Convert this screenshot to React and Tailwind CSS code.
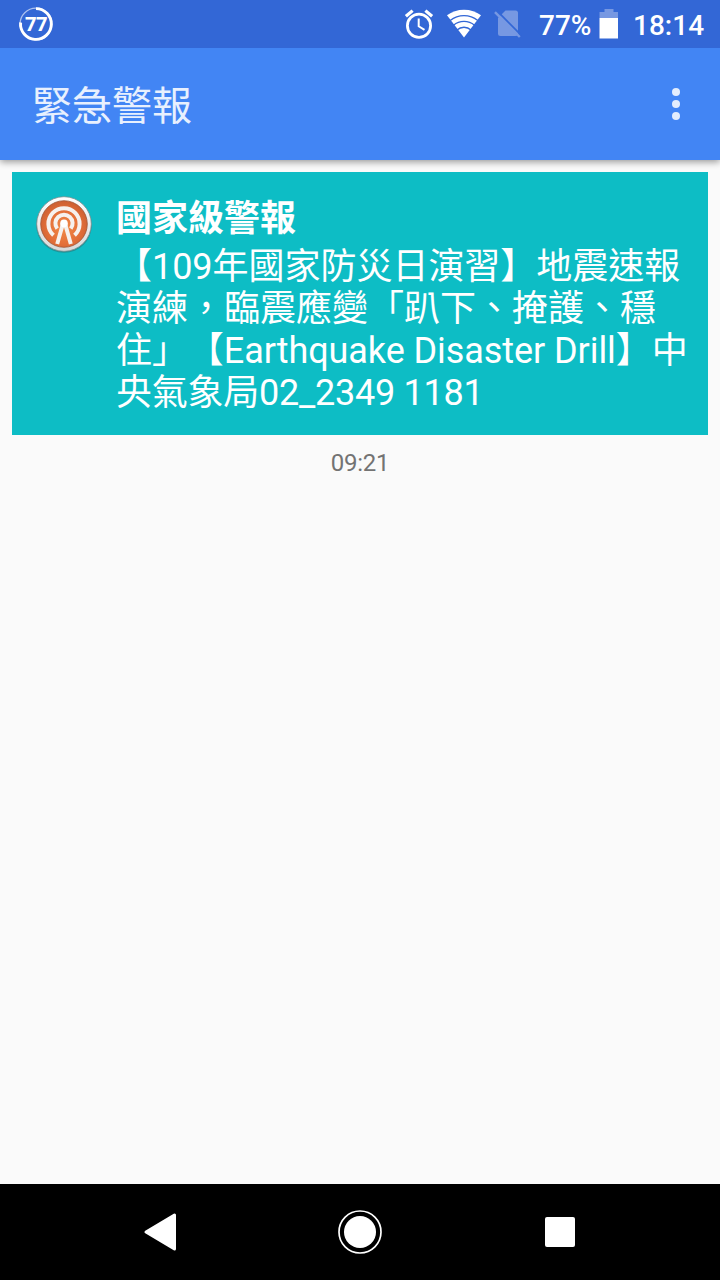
const ALERT_LINES = [
  { text: "【109年國家防災日演習】地震速報", tracking: "tracking-[-0.03px]" },
  { text: "演練，臨震應變「趴下、掩護、穩", tracking: "tracking-normal" },
  { text: "住」【Earthquake Disaster Drill】中", tracking: "tracking-[-0.07px]" },
  { text: "央氣象局02_2349 1181", tracking: "tracking-[-0.25px]" },
];

const BatteryRing = () => (
  <svg className="h-9 w-9" viewBox="0 0 36 36" fill="none" stroke="#fff">
    <circle cx="18" cy="18" r="15.9" strokeWidth="1.2" opacity="0.6" />
    <path d="M18 2.6A15.4 15.4 0 1 1 2.6 16.5" strokeWidth="2.9" />
    <text
      x="18"
      y="25"
      textAnchor="middle"
      fill="#fff"
      stroke="none"
      className="font-['Open_Sans'] text-[20px] font-bold tracking-[-0.5px]"
    >
      77
    </text>
  </svg>
);

const AlarmIcon = () => (
  <svg className="h-7.5 w-7.5" viewBox="0 0 30 30" fill="none" stroke="#fff">
    <circle cx="15" cy="16.7" r="11.6" strokeWidth="2.8" />
    <path d="M1.9 7.3L8.6 1.6M28.1 7.3L21.4 1.6" strokeWidth="3.2" />
    <path d="M14.7 9.5V17.3L20.5 20.8" strokeWidth="2" />
  </svg>
);

const WifiIcon = () => (
  <svg className="h-7.5 w-9" viewBox="0 0 36 30">
    <path d="M18 28.6L1 6.3C5.7 2.8 11.6.8 18 .8s12.3 2 17 5.500z" fill="#fff" />
    <g fill="none" stroke="#3367d6" strokeWidth="1.3">
      <path d="M4.2 11.5A22 22 0 0 1 31.8 11.5" />
      <path d="M7.5 16.2A16.200 16.200 0 0 1 28.5 16.2" />
      <path d="M11 21A10.300 10.300 0 0 1 25 21" />
    </g>
  </svg>
);

const NoSimIcon = () => (
  <svg className="h-7.5 w-7" viewBox="0 0 28 30">
    <path
      d="M11.5 1.5H21.5Q24 1.5 24 4V24.5Q24 27 21.5 27H6.5Q4 27 4 24.5V9z"
      fill="#7798e2"
    />
    <path d="M2.6 1.5L27.6 26.5" stroke="#3367d6" strokeWidth="1.8" />
    <path d="M1 3.2L25.8 28" stroke="#7798e2" strokeWidth="2.4" />
  </svg>
);

const BatteryIcon = () => (
  <svg className="h-7.5 w-5" viewBox="0 0 20 30">
    <path d="M5.5 0h9v3H19v6H.5V3h5z" fill="#7798e2" />
    <path d="M.5 9H19v20.500H.5z" fill="#fff" />
  </svg>
);

const BroadcastIcon = () => (
  <svg className="-mt-[1.5px] h-15 w-15" viewBox="0 0 60 60">
    <defs>
      <radialGradient id="orange" cx="50%" cy="58%" r="55%">
        <stop offset="0" stopColor="#f08a48" />
        <stop offset="0.6" stopColor="#e5713a" />
        <stop offset="1" stopColor="#cf6133" />
      </radialGradient>
      <linearGradient id="rim" x1="0" y1="0" x2="0" y2="1">
        <stop offset="0" stopColor="#fff" />
        <stop offset="1" stopColor="#d8d8d8" />
      </linearGradient>
    </defs>
    <circle cx="30" cy="31" r="27.8" fill="#2b6f73" opacity="0.55" />
    <circle cx="30" cy="30" r="27.3" fill="url(#rim)" stroke="#7c8f8f" strokeWidth="0.8" />
    <circle cx="30" cy="30" r="23.3" fill="url(#orange)" stroke="#9f5435" strokeWidth="0.8" />
    <g fill="none" stroke="#f6f1ee" strokeWidth="4">
      <path d="M19.5 41.3A15.6 15.6 0 1 1 40.5 41.3" />
      <path d="M23.2 34.6A8.6 8.6 0 1 1 36.8 34.6" />
      <path d="M29 29.5L23.2 50M31 29.5L36.8 50" />
    </g>
    <circle cx="30" cy="29.4" r="3.8" fill="#fff" />
  </svg>
);

const StatusBar = () => (
  <div className="z-20 flex h-12 items-center bg-[#3367d6] pl-[18px] text-white">
    <BatteryRing />
    <div className="ml-auto flex h-full items-center pr-4">
      <AlarmIcon />
      <div className="ml-3">
        <WifiIcon />
      </div>
      <div className="ml-3">
        <NoSimIcon />
      </div>
      <span className="ml-[17px] w-[53px] pt-[3px] text-[28px] leading-8 font-medium whitespace-nowrap">
        77%
      </span>
      <div className="ml-[7px]">
        <BatteryIcon />
      </div>
      <span className="ml-3.5 w-[71px] pt-[3px] text-[28px] leading-8 font-medium whitespace-nowrap">
        18:14
      </span>
    </div>
  </div>
);

const AppBar = () => (
  <header className="z-10 flex h-28 items-center justify-between bg-[#4285f4] pr-10 pl-8 shadow-[0_2px_7px_rgba(0,0,0,0.4)]">
    <h1 className="pt-1.5 text-[40px] leading-[56px] text-[#e8f0fe]">緊急警報</h1>
    <button className="flex flex-col gap-1" aria-label="更多選項">
      <span className="size-2 rounded-full bg-[#e3edfd]" />
      <span className="size-2 rounded-full bg-[#e3edfd]" />
      <span className="size-2 rounded-full bg-[#e3edfd]" />
    </button>
  </header>
);

const AlertCard = () => (
  <div className="flex h-[263px] bg-[#0dbdc5] pt-[23px] pl-[22px] text-white">
    <BroadcastIcon />
    <div className="ml-[22px] pt-[3px] text-[36px] leading-[42px] whitespace-nowrap">
      <h2 className="mb-[6px] font-bold">國家級警報</h2>
      {ALERT_LINES.map(({ text, tracking }) => (
        <p key={text} className={tracking}>
          {text}
        </p>
      ))}
    </div>
  </div>
);

const NavBar = () => (
  <nav className="flex h-24 items-center justify-between bg-black px-[138px]">
    <svg className="size-11" viewBox="0 0 44 44">
      <path
        d="M8 22L36.5 5V39z"
        fill="#fff"
        stroke="#fff"
        strokeWidth="3"
        strokeLinejoin="round"
      />
    </svg>
    <svg className="size-11" viewBox="0 0 44 44">
      <circle cx="22" cy="22" r="21" fill="none" stroke="#fff" strokeWidth="1.7" />
      <circle cx="22" cy="22" r="16" fill="#fff" />
    </svg>
    <div className="flex size-11 items-center justify-center">
      <span className="size-[30px] rounded-xs bg-white" />
    </div>
  </nav>
);

export default function App() {
  return (
    <div className="flex h-screen w-full flex-col overflow-hidden bg-[#fafafa] font-[Roboto,'Noto_Sans_CJK_TC',sans-serif] [text-spacing-trim:space-all]">
      <StatusBar />
      <AppBar />
      <main className="flex-1 px-3 pt-3">
        <AlertCard />
        <p className="mt-3 text-center text-2xl leading-8 tracking-[-0.3px] text-[#737373]">09:21</p>
      </main>
      <NavBar />
    </div>
  );
}
